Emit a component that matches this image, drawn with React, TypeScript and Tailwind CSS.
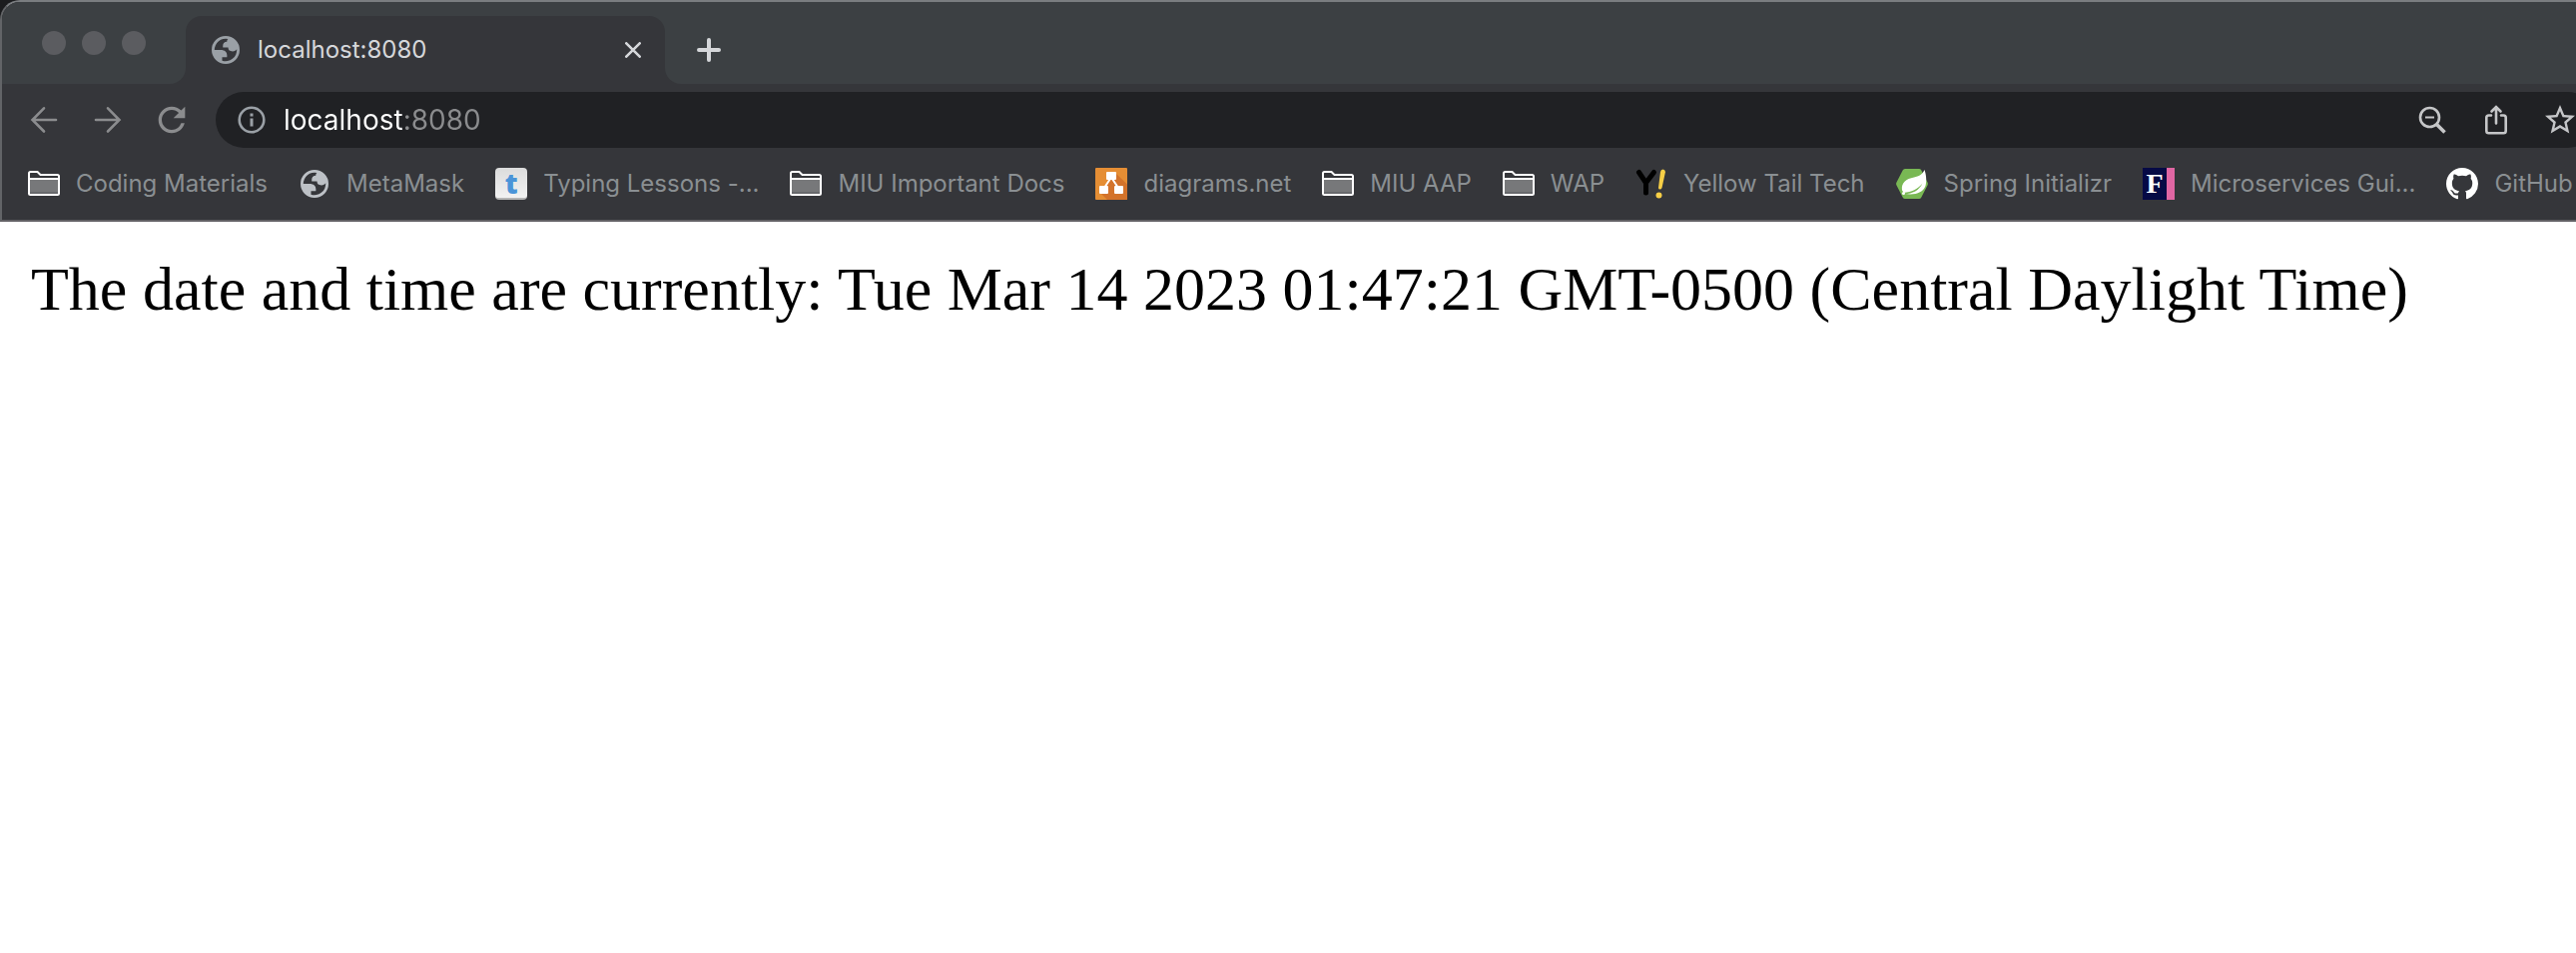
import type { ReactNode } from 'react';
import { BsGithub } from 'react-icons/bs';
import { MdRefresh, MdStarBorder } from 'react-icons/md';

function GlobeIcon({ className }: { className: string }) {
  return (
    <svg viewBox="0 0 20 20" className={className} fill="currentColor" aria-hidden="true">
      <path
        fillRule="evenodd"
        d="M10 0a10 10 0 1 0 0 20a10 10 0 1 0 0-20zM2 10h4.4c3.407.022 4.922 1.73 4.543 5.127H7.488v2.47a8.004 8.004 0 0 0 10.498-8.083C17.327 10.504 16.332 11 15 11c-2.137 0-3.206-.916-3.206-2.75H8.046c-.274-2.728.683-4.092 2.87-4.092 0-.975.327-1.597.811-1.97A8.004 8.004 0 0 0 2 10z"
      />
    </svg>
  );
}

function FolderIcon() {
  return (
    <svg viewBox="0 0 32 32" className="size-8" aria-hidden="true">
      <path d="M2 12h28v14H2z" fill="#77787a" />
      <path d="M2 24h28v2H2z" fill="#67686b" />
      <path
        d="M1 26V5.500q0-1.500 1.500-1.500H9.500l3 3H29.500q1.500 0 1.500 1.500V25.500q0 1.500-1.500 1.500H2.500Q1 27 1 25.500zM1 11H31"
        fill="none"
        stroke="#fff"
        strokeWidth="2"
      />
    </svg>
  );
}

function TypingIcon() {
  return (
    <span className="flex size-8 items-center justify-center rounded-sm border-b-2 border-[#b5b5b5] bg-linear-to-b from-[#dcdcdc] to-[#f2f2f2] font-['Open_Sans',sans-serif] text-[28px] leading-7 font-extrabold text-[#4a94d8]">
      t
    </span>
  );
}

function DiagramsIcon() {
  return (
    <svg viewBox="0 0 32 32" className="size-8" aria-hidden="true">
      <rect width="32" height="32" rx="1" fill="#e58e34" />
      <path d="M20 5L32 16.500V31q0 1-1 1H12L5 25l9-13z" fill="#d3732b" />
      <path d="M15 11L9 20M17 11l6 9" stroke="#fff" strokeWidth="2" />
      <rect x="11" y="4" width="10" height="8" rx="1" fill="#fff" />
      <rect x="4" y="18" width="9" height="8" rx="1" fill="#fff" />
      <rect x="19" y="18" width="9" height="8" rx="1" fill="#fff" />
    </svg>
  );
}

function YellowTailIcon() {
  return (
    <svg viewBox="0 0 32 32" className="size-8" aria-hidden="true">
      <path
        d="M3.500 4.500L10.500 15L18.500 4.500M10.500 14V25"
        fill="none"
        stroke="#000"
        strokeWidth="5"
        strokeLinecap="round"
        strokeLinejoin="round"
      />
      <path d="M25 4q.4-2.500 2.500-2.500T30 4L26.500 20q-.5 1.500-2 1.500T23 20z" fill="#f7cf46" />
      <circle cx="23.500" cy="27.500" r="3" fill="#f7cf46" />
    </svg>
  );
}

function SpringIcon() {
  return (
    <svg viewBox="0 0 32 32" className="size-8" aria-hidden="true">
      <path
        d="M9.500 1H23q1.500 0 2.200 1.300L31.500 14.500q.8 1.500 0 3L25.200 29.700Q24.500 31 23 31H9q-1.500 0-2.200-1.300L.5 17.500q-.8-1.500 0-3L6.800 2.300Q7.800 1 9.500 1z"
        fill="#79b854"
      />
      <path
        d="M28.500 2C26 7 23 8.500 18 9.500C10 11 5 15 6 22.500C7 24 8 25 9 26C19 27.500 27 25 29.500 18C31 13 30 6 28.500 2z"
        fill="#fff"
      />
      <path d="M7.500 25C16 24 21 22 26.500 15.500C23 22.500 17 26 8 26.200z" fill="#79b854" />
      <circle cx="7.500" cy="25.500" r="1.500" fill="#fff" />
    </svg>
  );
}

function MicroservicesIcon() {
  return (
    <span className="flex size-8 items-center justify-center border-r-8 border-[#e066a3] bg-[#060a45] font-['Liberation_Serif',serif] text-[28px] leading-8 font-bold text-white">
      F
    </span>
  );
}

const globe = <GlobeIcon className="mx-0.5 size-7 text-[#bdc1c6]" />;

const bookmarks: { label: string; icon: ReactNode }[] = [
  { label: 'Coding Materials', icon: <FolderIcon /> },
  { label: 'MetaMask', icon: globe },
  { label: 'Typing Lessons -...', icon: <TypingIcon /> },
  { label: 'MIU Important Docs', icon: <FolderIcon /> },
  { label: 'diagrams.net', icon: <DiagramsIcon /> },
  { label: 'MIU AAP', icon: <FolderIcon /> },
  { label: 'WAP', icon: <FolderIcon /> },
  { label: 'Yellow Tail Tech', icon: <YellowTailIcon /> },
  { label: 'Spring Initializr', icon: <SpringIcon /> },
  { label: 'Microservices Gui...', icon: <MicroservicesIcon /> },
  { label: 'GitHub', icon: <BsGithub className="size-8 text-white" /> },
];

function TabStrip() {
  return (
    <div className="flex h-[82px] bg-[#35363a]">
      <div className="flex w-[184px] shrink-0 items-start gap-4 rounded-br-2xl bg-[#3c4043] pt-[29px] pl-10">
        <button aria-label="Close window" className="size-6 rounded-full bg-[#5b5c60]" />
        <button aria-label="Minimize window" className="size-6 rounded-full bg-[#5b5c60]" />
        <button aria-label="Zoom window" className="size-6 rounded-full bg-[#5b5c60]" />
      </div>
      <div className="w-[480px] shrink-0 bg-[#3c4043] pt-3.5">
        <div className="flex h-full items-center rounded-t-2xl bg-[#35363a] pr-6 pl-[26px]">
          <GlobeIcon className="size-7 text-[#9aa0a6]" />
          <span className="ml-[18px] grow text-[24px] leading-8 text-[#d5d7da]">localhost:8080</span>
          <button aria-label="Close tab" className="text-[#d5d7da]">
            <svg viewBox="0 0 16 16" className="size-4" fill="none" stroke="currentColor" strokeWidth="2.600" strokeLinecap="round">
              <path d="M1.300 1.300l13.400 13.400M14.700 1.300L1.300 14.700" />
            </svg>
          </button>
        </div>
      </div>
      <div className="flex grow items-center rounded-bl-2xl bg-[#3c4043] pt-3.5 pl-8">
        <button aria-label="New tab" className="text-[#d5d7da]">
          <svg viewBox="0 0 24 24" className="size-6" fill="none" stroke="currentColor" strokeWidth="4" strokeLinecap="round">
            <path d="M12 2v20M2 12h20" />
          </svg>
        </button>
      </div>
    </div>
  );
}

function Toolbar() {
  return (
    <div className="flex h-[72px] items-center overflow-hidden">
      <div className="flex w-[214px] shrink-0 items-center gap-6 pl-[22px] text-[#8b8c8e]">
        <button aria-label="Back" className="flex size-10 items-center justify-center">
          <svg viewBox="0 0 28 28" className="size-7" fill="none" stroke="currentColor" strokeWidth="2.600" strokeLinecap="round">
            <path d="M14 2.300L2.500 14L14 25.500M2.500 14H26" />
          </svg>
        </button>
        <button aria-label="Forward" className="flex size-10 items-center justify-center">
          <svg viewBox="0 0 28 28" className="size-7" fill="none" stroke="currentColor" strokeWidth="2.600" strokeLinecap="round">
            <path d="M14 2.300L25.500 14L14 25.500M25.500 14H2" />
          </svg>
        </button>
        <button aria-label="Reload">
          <MdRefresh className="size-10" />
        </button>
      </div>
      <div className="-mr-5 flex h-14 grow items-center rounded-full bg-[#202124] pr-[18px] pl-[22px]">
        <svg viewBox="0 0 28 28" className="size-7 shrink-0 text-[#9aa0a6]" fill="none" stroke="currentColor" strokeWidth="2.600" aria-hidden="true">
          <circle cx="14" cy="14" r="12.300" />
          <path d="M14 12.500v8M14 7.500v3" strokeWidth="3" />
        </svg>
        <input
          aria-label="Address"
          defaultValue="localhost:8080"
          className="ml-[18px] h-12 min-w-0 grow bg-[linear-gradient(to_right,#ffffff_119px,#8b8c8e_119px)] bg-clip-text text-[28px] text-transparent outline-none"
        />
        <div className="flex items-center gap-7 text-[#c5c6c8]">
          <button aria-label="Zoom out" className="flex size-9 items-center justify-center">
            <svg viewBox="0 0 28 28" className="size-7" fill="none" stroke="currentColor" strokeWidth="2.600">
              <circle cx="11.500" cy="11.500" r="9.500" />
              <path d="M7 11.500h9" strokeWidth="2" />
              <path d="M18.500 18.500l8 8" strokeWidth="3.600" />
            </svg>
          </button>
          <button aria-label="Share" className="flex size-9 items-center justify-center">
            <svg viewBox="0 0 28 30" className="h-[30px] w-7" fill="none" stroke="currentColor" strokeWidth="2.600" strokeLinecap="round">
              <path d="M9 10.500H6.500q-2.200 0-2.200 2.200V26q0 2.200 2.200 2.200H21.500q2.200 0 2.200-2.200V12.700q0-2.200-2.200-2.200H19M14 18.500V3M9.500 6.500L14 2l4.500 4.500" />
            </svg>
          </button>
          <button aria-label="Bookmark this page">
            <MdStarBorder className="size-9" />
          </button>
        </div>
      </div>
    </div>
  );
}

export default function App() {
  return (
    <div className="min-h-screen bg-white font-[Inter,sans-serif]">
      <header className="bg-[#1b1c1e]">
        <div className="overflow-hidden rounded-tl-[20px] border-t-2 border-b-2 border-l-2 border-t-[#7a7d80] border-b-[#626064] border-l-[#626467] bg-[#35363a]">
          <TabStrip />
          <Toolbar />
          <nav aria-label="Bookmarks" className="flex h-16 gap-[31px] overflow-hidden pb-2 pl-[26px]">
            {bookmarks.map(({ label, icon }) => (
              <a key={label} href="#" className="flex shrink-0 items-center gap-4 text-[24px] leading-8 whitespace-nowrap text-[#8a8f92]">
                {icon}
                {label}
              </a>
            ))}
          </nav>
        </div>
      </header>
      <main className="px-[31px] py-[31px] font-['Liberation_Serif',serif] text-[62px] leading-[72px] text-black">
        The date and time are currently: Tue Mar 14 2023 01:47:21 GMT-0500 (Central Daylight Time)
      </main>
    </div>
  );
}
